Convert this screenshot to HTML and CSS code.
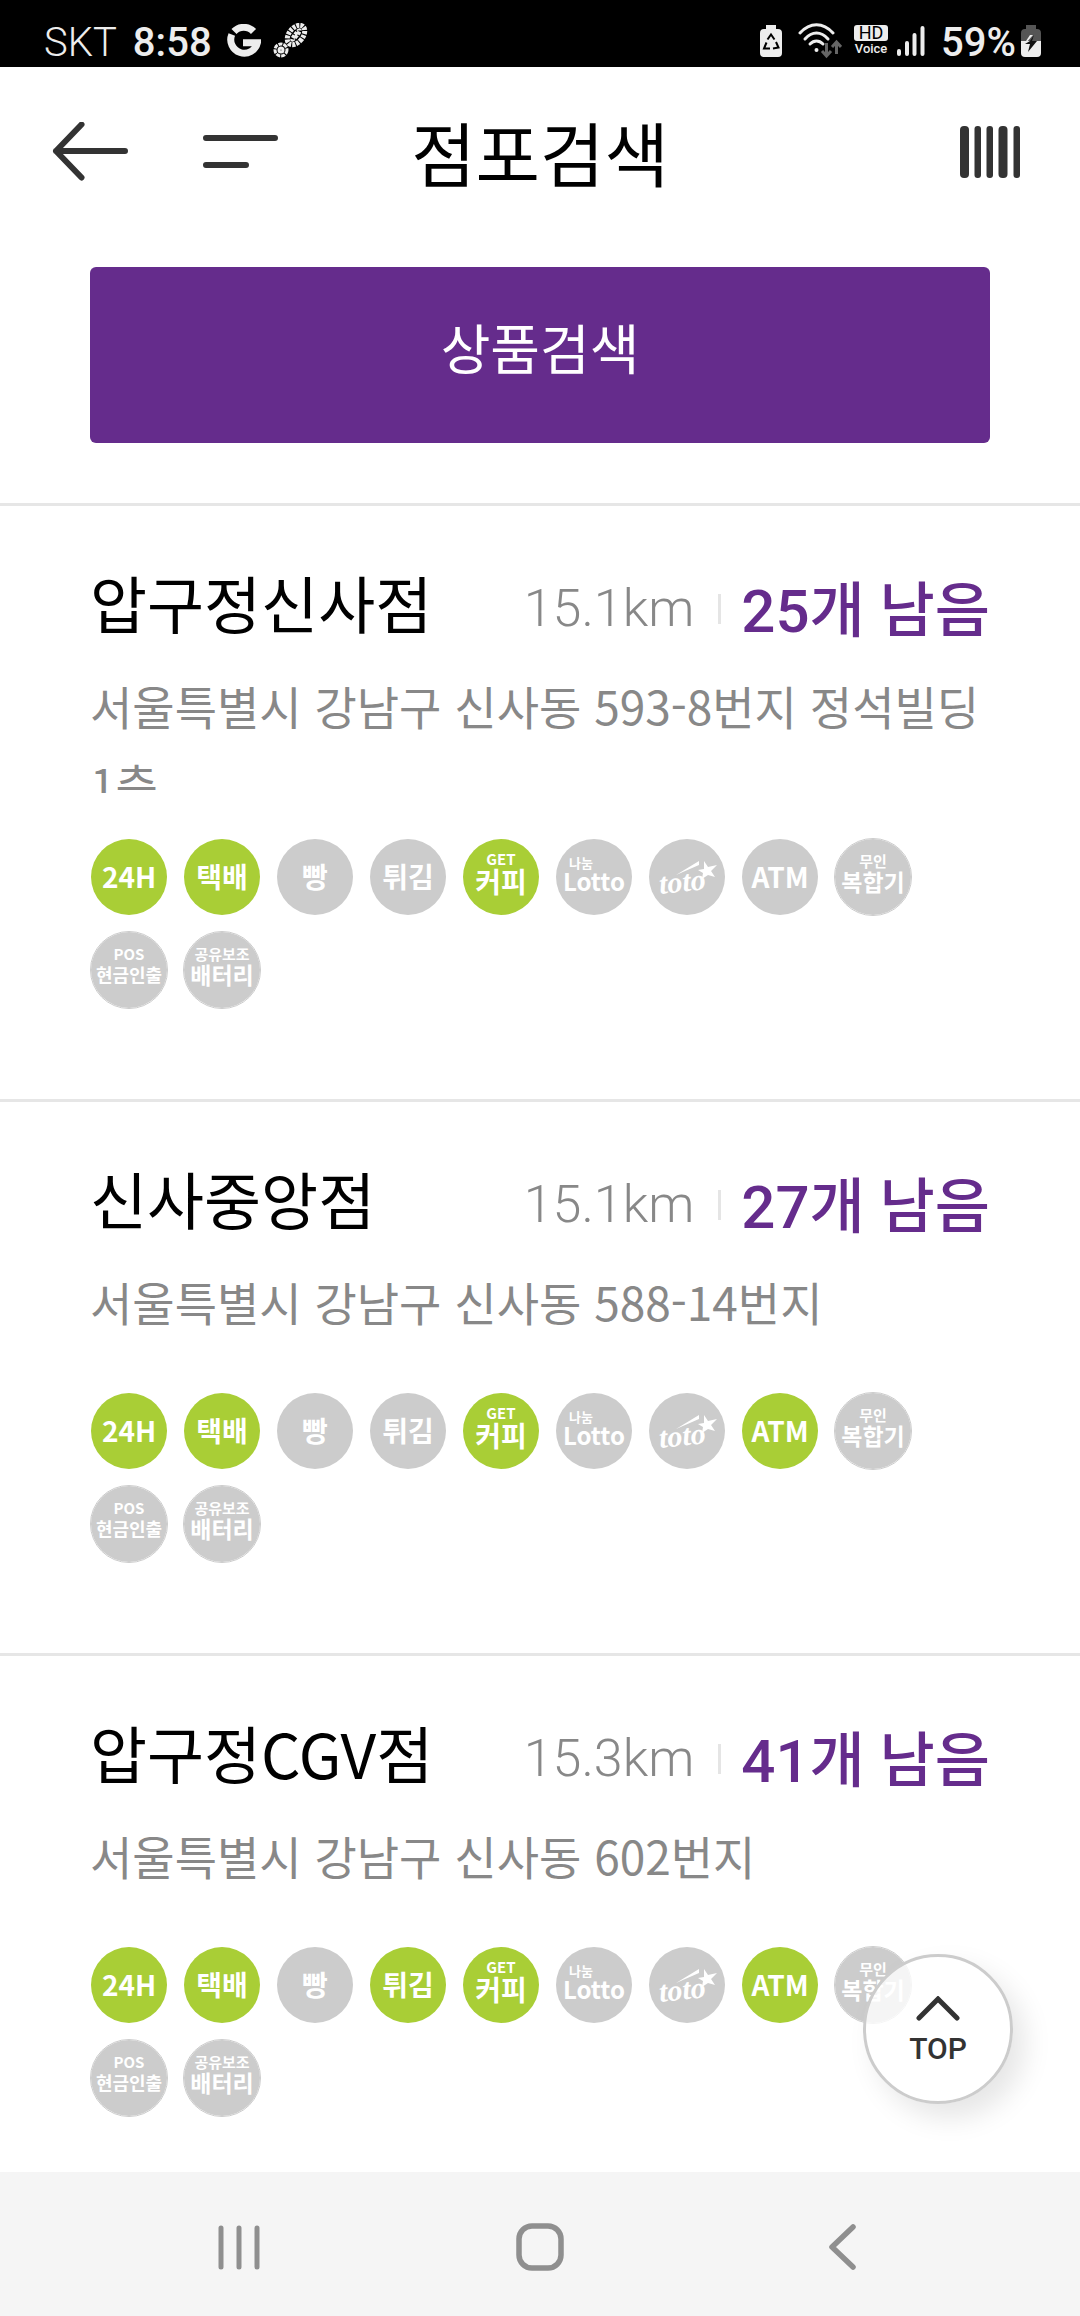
FILE: index.html
```html
<!DOCTYPE html>
<html lang="ko">
<head>
<meta charset="utf-8">
<meta name="viewport" content="width=device-width, initial-scale=1">
<title>점포검색</title>
<link rel="stylesheet" href="styles.css">
</head>
<body>
<div class="status">
  <div class="status-group">
    <span class="carrier">SKT</span>
    <span class="clock">8:58</span>
    <svg class="ic-google" width="34" height="34" viewBox="0 0 34 34" fill="none" stroke="#ededed" stroke-width="7"><path d="M26.500 7.500A13.500 13.500 0 0 0 7 7.500"/><path d="M4.800 10.500A13.500 13.500 0 1 0 30.400 18.800H16"/></svg>
    <svg class="ic-steps" width="36" height="36" viewBox="0 0 36 36" fill="none" stroke="#ededed"><g transform="rotate(38 23 12)"><ellipse cx="23" cy="12" rx="7" ry="11" stroke-width="5" stroke-dasharray="3 1"/><ellipse cx="23" cy="12" rx="1" ry="6" stroke-width="4" stroke-dasharray="3 1"/></g><circle cx="8" cy="27" r="6" stroke-width="3" stroke-dasharray="4 1"/><circle cx="8" cy="27" r="2" stroke-width="3"/></svg>
  </div>
  <div class="status-group">
    <svg width="22" height="34" viewBox="0 0 22 34"><path fill="#ededed" d="M6 1h10v4h2a4 4 0 0 1 4 4v20a4 4 0 0 1-4 4H4a4 4 0 0 1-4-4V9a4 4 0 0 1 4-4h2z"/><g fill="none" stroke="#000" stroke-width="2"><path d="M7.500 15.500L11 10.500l3.500 5"/><path d="M16 18l2.500 5.500-5.500 1"/><path d="M10 24.500H4l2.500-6"/></g></svg>
    <svg class="ic-wifi" width="44" height="36" viewBox="0 0 44 36" fill="none" stroke="#ededed" stroke-width="3" stroke-linecap="round"><path d="M2 10C12-1 25-1 35 10"/><path d="M7 16C14 8 23 8 30 16"/><path d="M12 21c4-4 9-4 13 0"/><circle cx="18.500" cy="27" r="1" stroke-width="2"/><g stroke="#666" stroke-linecap="butt"><path d="M28.500 20v13M24 28l4.500 5 4.500-5M38.500 31V19M34 24l4.500-5 4.500 5"/></g></svg>
    <span class="voice"><span class="hd">HD</span><span class="voice-label">Voice</span></span>
    <svg class="ic-signal" width="28" height="32" viewBox="0 0 28 32" stroke="#ededed" stroke-width="4" stroke-linecap="round"><path d="M2 26v3M10 18v11M17.500 10v19M25.500 3v26"/></svg>
    <span class="percent">59%</span>
    <svg width="20" height="34" viewBox="0 0 20 34"><path fill="#555" d="M5 1h10v4h1a4 4 0 0 1 4 4v9H0V9a4 4 0 0 1 4-4h1z"/><path fill="#ededed" d="M0 17h20v12a4 4 0 0 1-4 4H4a4 4 0 0 1-4-4z"/><path fill="#ededed" d="M12 11h-3L5 17v2z"/><path fill="#111" d="M9 17L4 20h5L7 28l9-11h-5l2-6z"/></svg>
  </div>
</div>

<header class="header">
  <div class="header-side">
    <button class="icon-btn" aria-label="뒤로"><svg width="76" height="60" viewBox="0 0 76 60" fill="none" stroke="#333" stroke-width="6" stroke-linecap="round" stroke-linejoin="round"><path d="M73 29H4M29.500 2.500L4 29l25.500 26.500"/></svg></button>
    <button class="icon-btn" aria-label="메뉴"><svg width="76" height="60" viewBox="0 0 76 60" stroke="#333" stroke-width="6" stroke-linecap="round"><path d="M4 16h69M4 43h40"/></svg></button>
  </div>
  <h1 class="title">점포검색</h1>
  <div class="header-side header-end">
    <button class="icon-btn" aria-label="바코드"><svg width="60" height="52" viewBox="0 0 60 52" fill="#333"><rect width="9" height="52" rx="4"/><rect x="14.500" width="6.500" height="52" rx="3"/><rect x="26.500" width="6.500" height="52" rx="3"/><rect x="38.500" width="9" height="52" rx="4"/><rect x="53.500" width="6.500" height="52" rx="3"/></svg></button>
  </div>
</header>

<main class="content">
  <div class="search"><button class="search-btn">상품검색</button></div>
  <ul class="stores" id="stores"></ul>
  <a class="top-btn" href="#stores">
    <svg width="44" height="26" viewBox="0 0 44 26" fill="none" stroke="#333" stroke-width="5" stroke-linecap="round" stroke-linejoin="miter"><path d="M3 22L22 3l19 19"/></svg>
    <span>TOP</span>
  </a>
</main>

<nav class="navbar">
  <button class="nav-btn" aria-label="최근 앱"><svg width="48" height="48" viewBox="0 0 48 48" stroke="#8f8f8f" stroke-width="5" stroke-linecap="round"><path d="M6 5v39M24 5v39M42 5v39"/></svg></button>
  <button class="nav-btn" aria-label="홈"><svg width="48" height="48" viewBox="0 0 48 48" fill="none" stroke="#8f8f8f" stroke-width="5.500"><rect x="3" y="3" width="42" height="42" rx="13"/></svg></button>
  <button class="nav-btn" aria-label="이전"><svg width="48" height="48" viewBox="0 0 48 48" fill="none" stroke="#8f8f8f" stroke-width="5.500" stroke-linecap="round" stroke-linejoin="round"><path d="M36 4L15 24l21 20"/></svg></button>
</nav>
<script src="stores.js"></script>
</body>
</html>
```
FILE: stores.js
```js
const services = [
  { id: "open24", main: "24H", size: "md" },
  { id: "parcel", main: "택배", size: "md" },
  { id: "bread", main: "빵", size: "md" },
  { id: "fried", main: "튀김", size: "md" },
  { id: "coffee", small: "GET", main: "커피", size: "md" },
  { id: "lotto", small: "나눔", main: "Lotto", size: "lotto" },
  { id: "toto", main: "toto", size: "toto" },
  { id: "atm", main: "ATM", size: "md" },
  { id: "copier", small: "무인", main: "복합기", size: "sm", wide: true },
  { id: "pos", small: "POS", main: "현금인출", size: "xs", wide: true },
  { id: "battery", small: "공유보조", main: "배터리", size: "sm", wide: true },
];

const stores = [
  { name: "압구정신사점", km: "15.1km", left: "25개 남음", address: "서울특별시 강남구 신사동 593-8번지 정석빌딩 1층", on: ["open24", "parcel", "coffee"] },
  { name: "신사중앙점", km: "15.1km", left: "27개 남음", address: "서울특별시 강남구 신사동 588-14번지", on: ["open24", "parcel", "coffee", "atm"] },
  { name: "압구정CGV점", km: "15.3km", left: "41개 남음", address: "서울특별시 강남구 신사동 602번지", on: ["open24", "parcel", "fried", "coffee", "atm"] },
];

const totoLogo = `<svg width="76" height="76" viewBox="0 0 76 76" fill="#fff">
  <path d="M27 36L50 22v4z"/>
  <path d="M55 22l4 6 9-2-6 6 4 6-7-2-6 4 1-6-5-3 6-1z"/>
  <text class="toto-text" x="11" y="55" transform="rotate(-6 11 55)">toto</text>
</svg>`;

function badge(service, on) {
  const classes = ["badge", `badge-${service.size}`];
  if (on) classes.push("is-on");
  if (service.wide) classes.push("is-wide");
  if (service.small) classes.push("is-stacked");
  const label = service.id === "toto"
    ? totoLogo
    : (service.small ? `<small>${service.small}</small>` : "") + `<span>${service.main}</span>`;
  return `<li class="${classes.join(" ")}">${label}</li>`;
}

document.getElementById("stores").innerHTML = stores.map((s) => `
  <li class="store">
    <div class="store-head">
      <h2 class="store-name">${s.name}</h2>
      <div class="store-info">
        <span class="distance">${s.km}</span>
        <strong class="left">${s.left}</strong>
      </div>
    </div>
    <p class="address">${s.address}</p>
    <ul class="badges">${services.map((v) => badge(v, s.on.includes(v.id))).join("")}</ul>
  </li>`).join("");
```
FILE: styles.css
```css
* {
  box-sizing: border-box;
}

body {
  margin: 0;
  height: 100vh;
  display: flex;
  flex-direction: column;
  background: #fff;
  color: #000;
  font-family: "Noto Sans CJK KR", sans-serif;
}

button {
  padding: 0;
  border: 0;
  background: none;
  font: inherit;
  cursor: pointer;
}

ul, h1, h2, p {
  margin: 0;
  padding: 0;
}

ul {
  list-style: none;
}

svg {
  display: block;
  flex: none;
}

/* status bar */
.status {
  flex: none;
  height: 67px;
  padding: 15px 39px 0 44px;
  display: flex;
  align-items: center;
  justify-content: space-between;
  background: #000;
  color: #ededed;
  font: 40px/52px Roboto, sans-serif;
}

.status-group {
  display: flex;
  align-items: center;
}

.carrier,
.clock,
.percent {
  padding-top: 4px;
}

.carrier {
  font-weight: 300;
}

.clock {
  margin: 0 15px 0 16px;
  font-weight: 500;
}

.ic-google,
.ic-steps,
.ic-wifi {
  margin-right: 12px;
}

.ic-wifi {
  margin-left: 16px;
}

.voice {
  display: flex;
  flex-direction: column;
  width: 34px;
  text-align: center;
}

.hd {
  border-radius: 3px;
  background: #ededed;
  color: #000;
  font-size: 18px;
  line-height: 16px;
}

.voice-label {
  font-size: 13px;
  font-weight: 500;
  line-height: 16px;
}

.ic-signal {
  margin: 0 16px 0 9px;
}

.percent {
  margin-right: 5px;
  font-weight: 500;
}

/* page header */
.header {
  flex: none;
  height: 170px;
  padding: 0 52px;
  display: grid;
  grid-template-columns: 1fr auto 1fr;
  align-items: center;
}

.header-side {
  display: flex;
  gap: 74px;
}

.header-end {
  justify-content: flex-end;
  padding-right: 8px;
}

.title {
  font-size: 70px;
  font-weight: 400;
  line-height: 100px;
}

/* store list */
.content {
  position: relative;
  flex: 1;
  min-height: 0;
  overflow: hidden;
}

.search {
  padding: 30px 90px 60px;
}

.search-btn {
  display: block;
  width: 100%;
  height: 176px;
  padding-bottom: 18px;
  border-radius: 6px;
  background: #652c8c;
  color: #fff;
  font-size: 54px;
}

.store {
  padding: 51px 90px 90px;
  border-top: 3px solid #e6e6e6;
}

.store-head {
  display: flex;
  height: 90px;
}

.store-name {
  flex: 1;
  font-size: 62px;
  font-weight: 400;
  line-height: 90px;
}

.store-info {
  display: flex;
  padding-top: 10px;
}

.distance {
  display: flex;
  align-items: center;
  padding-top: 4px;
  color: #888;
  font: 300 52px/90px Roboto, sans-serif;
}

.distance::after {
  content: "";
  width: 3px;
  height: 30px;
  margin: 0 20px 0 24px;
  background: #e5e5e5;
}

.left {
  color: #652c8c;
  font: 500 60px/90px Roboto, "Noto Sans CJK KR", sans-serif;
}

.address {
  min-height: 85px;
  max-height: 127px;
  margin: 19px 0 45px;
  overflow: hidden;
  color: #888;
  font-size: 46px;
  line-height: 78px;
}

/* service badges */
.badges {
  display: flex;
  flex-wrap: wrap;
  gap: 15px;
}

.badge {
  width: 78px;
  height: 78px;
  display: flex;
  flex-direction: column;
  align-items: center;
  justify-content: center;
  padding-bottom: 2px;
  border: 1px solid transparent;
  border-radius: 50%;
  background: #ccc padding-box;
  color: #fff;
  font-weight: 700;
  line-height: 28px;
  white-space: nowrap;
}

.badge.is-on {
  background-color: #a9ce36;
}

.badge.is-wide {
  border-color: #ccc;
}

.badge.is-stacked {
  padding-bottom: 8px;
}

.badge small {
  font-size: 15px;
  font-weight: 700;
  line-height: 16px;
}

.badge-md {
  font-size: 28px;
}

.badge-sm {
  font-size: 23px;
  line-height: 24px;
}

.badge-xs {
  font-size: 18px;
  line-height: 24px;
}

.badge-lotto {
  font-size: 24px;
  line-height: 20px;
}

.badge-lotto small {
  margin-right: 26px;
  font-size: 13px;
}

.badge-toto {
  padding: 0;
}

.toto-text {
  font: italic 700 30px "Liberation Serif", serif;
}

/* back-to-top button */
.top-btn {
  position: absolute;
  right: 67px;
  bottom: 68px;
  width: 150px;
  height: 150px;
  padding-top: 9px;
  display: flex;
  flex-direction: column;
  align-items: center;
  justify-content: center;
  gap: 5px;
  border: 3px solid #ccc;
  border-radius: 50%;
  background: rgba(255, 255, 255, 0.8);
  box-shadow: 12px 14px 28px rgba(0, 0, 0, 0.1);
  color: #333;
  font: 500 30px/44px Roboto, sans-serif;
  text-decoration: none;
}

/* system navigation */
.navbar {
  flex: none;
  height: 144px;
  padding: 6px 88px 0;
  display: flex;
  background: #f5f5f5;
}

.nav-btn {
  flex: 1;
  display: flex;
  align-items: center;
  justify-content: center;
}
```
